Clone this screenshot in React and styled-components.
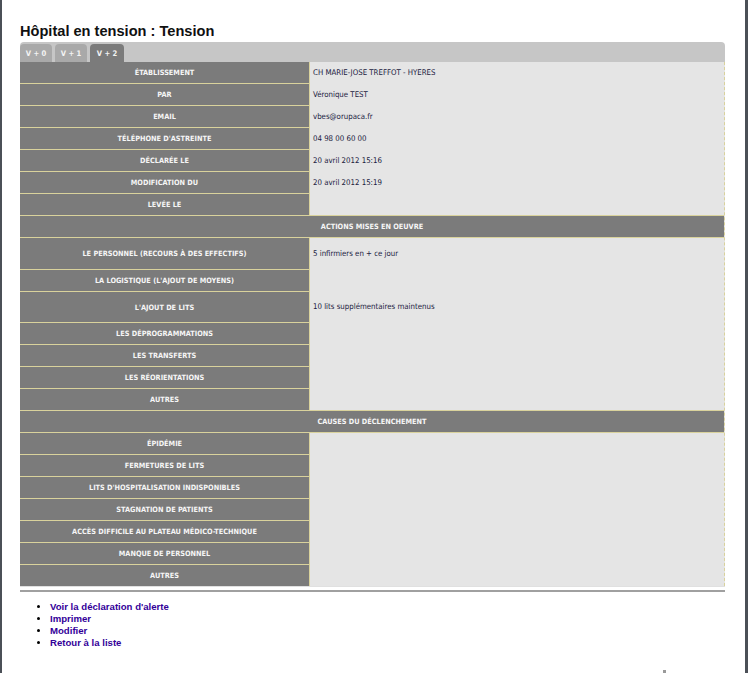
import React from "react";
import styled, { createGlobalStyle } from "styled-components";

const GlobalStyle = createGlobalStyle`
  html, body { margin: 0; padding: 0; background: #fff; }
  body { font-family: "Liberation Sans", Arial, sans-serif; }
`;

const Page = styled.div`
  box-sizing: border-box;
  min-height: 673px;
  border-left: 2px solid #4b5057;
  border-right: 3px solid #4b5057;
  padding: 0 20px 0 18px;
  position: relative;
`;

const Title = styled.h1`
  margin: 0;
  padding-top: 23px;
  height: 19px;
  font-size: 14.6px;
  line-height: 17px;
  font-weight: bold;
  color: #111;
`;

const Panel = styled.div`
  width: 705px;
`;

const TabBar = styled.div`
  height: 20px;
  background: #c6c6c6;
  border-radius: 4px 4px 0 0;
  display: flex;
  align-items: flex-end;
  gap: 3px;
`;

const Tab = styled.div`
  width: ${p => p.active ? 34 : 32}px;
  height: 18px;
  border-radius: 4px 4px 0 0;
  background: ${p => p.active ? '#7b7b7b' : '#a9a9a9'};
  color: #f4f4f4;
  font-family: "DejaVu Sans Condensed", sans-serif;
  font-weight: bold;
  font-size: 7.6px;
  display: flex;
  align-items: center;
  justify-content: center;
`;

const Table = styled.div`
  background: #e5e5e5;
  border-right: 1px dashed #d9d29c;
  font-family: "DejaVu Sans Condensed", sans-serif;
  font-size: 7.8px;
`;

const Row = styled.div`
  display: grid;
  grid-template-columns: 289px 1fr;
`;

const Label = styled.div`
  height: ${p => p.h || 21}px;
  border-top: ${p => p.first ? 'none' : '1px solid #d9d29c'};
  background: #7b7b7b;
  color: #f6f6f6;
  font-weight: bold;
  font-size: 7.3px;
  display: flex;
  align-items: center;
  justify-content: center;
  text-transform: uppercase;
`;

const Value = styled.div`
  border-left: 1px solid #d9d29c;
  color: #1a1a40;
  padding-left: 3px;
  display: flex;
  align-items: center;
`;

const SectionHead = styled.div`
  height: 21px;
  background: #7b7b7b;
  border-top: 1px solid #d9d29c;
  border-bottom: 1px solid #d9d29c;
  color: #f6f6f6;
  font-weight: bold;
  font-size: 7.3px;
  display: flex;
  align-items: center;
  justify-content: center;
`;

const Rule = styled.div`
  width: 705px;
  border-top: 1px solid #e0e0e0;
  height: 0;
  &::after {
    content: "";
    display: block;
    margin-top: 3px;
    border-top: 2px solid #a0a0a0;
  }
`;

const Links = styled.ul`
  margin: 14px 0 0;
  padding-left: 30px;
  list-style: disc;
  font-size: 9.6px;
  line-height: 12px;
  font-weight: bold;
`;

const LinkItem = styled.li`
  color: #000;
  a { color: #330099; text-decoration: none; }
`;

const Speck = styled.div`
  position: absolute;
  left: 661px;
  bottom: 0;
  width: 3px;
  height: 3px;
  background: #9a9a9a;
`;

const general = [
  ["Établissement", "CH MARIE-JOSE TREFFOT - HYERES"],
  ["Par", "Véronique TEST"],
  ["Email", "vbes@orupaca.fr"],
  ["Téléphone d'astreinte", "04 98 00 60 00"],
  ["Déclarée le", "20 avril 2012 15:16"],
  ["Modification du", "20 avril 2012 15:19"],
  ["Levée le", ""],
];

const actions = [
  ["Le personnel (recours à des effectifs)", "5 infirmiers en + ce jour", 31],
  ["La logistique (l'ajout de moyens)", ""],
  ["L'ajout de lits", "10 lits supplémentaires maintenus", 30],
  ["Les déprogrammations", ""],
  ["Les transferts", ""],
  ["Les réorientations", ""],
  ["Autres", ""],
];

const causes = [
  ["Épidémie", ""],
  ["Fermetures de lits", ""],
  ["Lits d'hospitalisation indisponibles", ""],
  ["Stagnation de patients", ""],
  ["Accès difficile au plateau médico-technique", ""],
  ["Manque de personnel", ""],
  ["Autres", ""],
];

const renderRows = (rows) =>
  rows.map(([label, value, h], i) => (
    <Row key={label + i}>
      <Label first={i === 0} h={h}>{label}</Label>
      <Value>{value}</Value>
    </Row>
  ));

export default function App() {
  return (
    <>
      <GlobalStyle />
      <Page>
        <Title>Hôpital en tension : Tension</Title>
        <Panel>
          <TabBar>
            <Tab>V + 0</Tab>
            <Tab>V + 1</Tab>
            <Tab active>V + 2</Tab>
          </TabBar>
          <Table>
            {renderRows(general)}
            <SectionHead>ACTIONS MISES EN OEUVRE</SectionHead>
            {renderRows(actions)}
            <SectionHead>CAUSES DU DÉCLENCHEMENT</SectionHead>
            {renderRows(causes)}
          </Table>
        </Panel>
        <Rule />
        <Links>
          <LinkItem><a href="#">Voir la déclaration d'alerte</a></LinkItem>
          <LinkItem><a href="#">Imprimer</a></LinkItem>
          <LinkItem><a href="#">Modifier</a></LinkItem>
          <LinkItem><a href="#">Retour à la liste</a></LinkItem>
        </Links>
        <Speck />
      </Page>
    </>
  );
}
